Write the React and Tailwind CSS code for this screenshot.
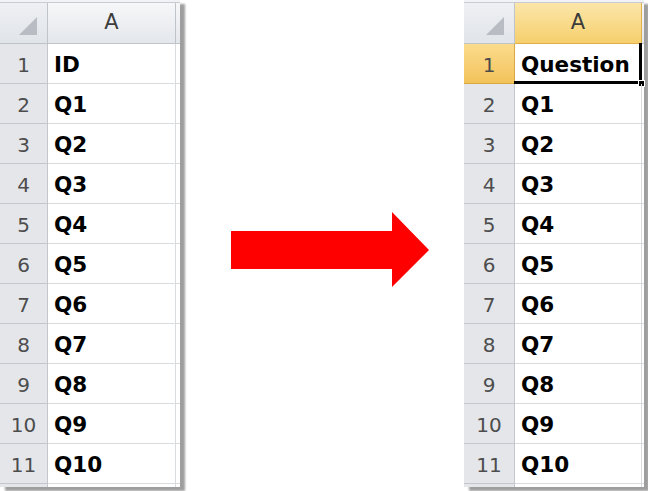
import React from 'react';

const cells = ['ID', 'Q1', 'Q2', 'Q3', 'Q4', 'Q5', 'Q6', 'Q7', 'Q8', 'Q9', 'Q10'];
const font = { fontFamily: '"DejaVu Sans", "Liberation Sans", sans-serif' };

function Corner() {
  return (
    <svg width="20" height="20" viewBox="0 0 20 20" className="absolute right-[9px] bottom-[7px]">
      <polygon points="19,1 19,19 1,19" fill="#b9bdc3" />
    </svg>
  );
}

function Sheet({ headW, colW, tailW, first, selected }) {
  return (
    <div className="bg-white shadow-[5px_4px_2px_rgba(0,0,0,0.38)]" style={font}>
      <div className="h-[3px] bg-[#f1f2f5] border-b border-[#c8ccd2]" />
      <div className="flex h-[41px]">
        <div className={`${headW} relative shrink-0 bg-gradient-to-b from-[#eef0f3] to-[#e1e4e9] border-r border-b border-[#bfc4cb]`}>
          <Corner />
        </div>
        <div
          className={`${colW} shrink-0 flex items-center justify-center text-[21px] border-r border-b ${
            selected
              ? 'bg-gradient-to-b from-[#fbe6a8] to-[#f6cf6c] text-[#3b3b3b] border-[#e2b04b]'
              : 'bg-gradient-to-b from-[#f6f7f9] to-[#e4e7eb] text-[#3d3d3d] border-[#bfc4cb]'
          }`}
        >
          A
        </div>
        <div className={`${tailW} shrink-0 bg-gradient-to-b from-[#f6f7f9] to-[#e4e7eb] border-b border-[#bfc4cb]`} />
      </div>
      {cells.map((c, i) => {
        const label = i === 0 ? first : c;
        const sel = selected && i === 0;
        return (
          <div key={i} className="flex h-[40px]">
            <div
              className={`${headW} shrink-0 flex items-center justify-center pt-[3px] text-[20px] border-r border-b ${
                sel
                  ? 'bg-gradient-to-b from-[#fbdc8c] to-[#f3c25a] text-[#4a4a4a] border-[#d9a845]'
                  : 'bg-[#e4e6ea] text-[#4d4d4d] border-[#c3c7cd]'
              }`}
            >
              {i + 1}
            </div>
            <div className={`${colW} relative shrink-0 flex items-center pl-[6px] pt-[3px] text-[21.5px] font-bold text-black border-r border-b border-[#d9dcdf]`}>
              {label}
              {sel && (
                <>
                  <div className="absolute -top-px -left-px -right-px -bottom-px border-r-[3px] border-b-[3px] border-black" />
                  <div className="absolute -right-[4px] -bottom-[4px] w-[7px] h-[7px] bg-black border border-white" />
                </>
              )}
            </div>
            <div className={`${tailW} shrink-0 border-b border-[#d9dcdf]`} />
          </div>
        );
      })}
      <div className="flex h-[3px]">
        <div className={`${headW} shrink-0 bg-[#e4e6ea] border-r border-[#c3c7cd]`} />
        <div className={`${colW} shrink-0 border-r border-[#d9dcdf]`} />
        <div className={`${tailW} shrink-0`} />
      </div>
    </div>
  );
}

function Arrow() {
  return (
    <svg width="198" height="75" viewBox="0 0 198 75" className="mt-[212px] ml-[51px] shrink-0">
      <polygon points="0,19 161,19 161,0 198,38 161,75 161,57 0,57" fill="#ff0000" />
    </svg>
  );
}

export default function App() {
  return (
    <div className="w-[648px] h-[491px] bg-white flex items-start overflow-hidden">
      <Sheet headW="w-[48px]" colW="w-[128px]" tailW="w-[4px]" first="ID" />
      <Arrow />
      <div className="ml-[35px]">
        <Sheet headW="w-[51px]" colW="w-[127px]" tailW="w-[2px]" first="Question" selected />
      </div>
    </div>
  );
}
